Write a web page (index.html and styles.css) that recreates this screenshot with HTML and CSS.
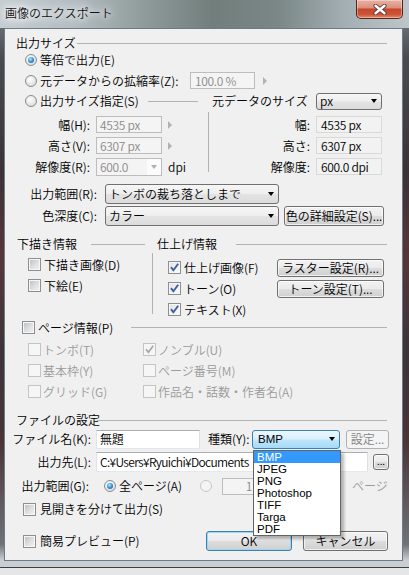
FILE: index.html
```html
<!DOCTYPE html>
<html lang="ja">
<head>
<meta charset="utf-8">
<title>画像のエクスポート</title>
<link rel="stylesheet" href="styles.css">
</head>
<body>
<div class="window">
  <div class="titlebar">
    <span class="title">画像のエクスポート</span>
    <div class="close">
      <svg width="16" height="11" viewBox="0 0 16 11"><path d="M3.5 1.8 L12.5 9.2 M12.5 1.8 L3.5 9.2" stroke="#5a3a34" stroke-width="4.2" stroke-linecap="round"/><path d="M3.5 1.8 L12.5 9.2 M12.5 1.8 L3.5 9.2" stroke="#ffffff" stroke-width="2.4" stroke-linecap="round"/></svg>
    </div>
  </div>

  <div class="client">
    <div class="hdr hdr-size"><span class="hdr-text size-text">出力サイズ</span><span class="hline"></span></div>

    <div class="row opt-e"><span class="radio on"></span><span class="txt">等倍で出力(E)</span></div>
    <div class="row opt-z"><span class="radio"></span><span class="txt scale-lbl">元データからの拡縮率(Z):</span><span class="inp dis scale-inp">100.0 %</span><span class="tri scale-tri"></span></div>
    <div class="row opt-s"><span class="radio"></span><span class="txt spec-lbl">出力サイズ指定(S)</span><span class="hline spec-line"></span><span class="txt src-lbl">元データのサイズ</span><span class="sel unit-sel">px</span></div>

    <div class="size-block">
      <div class="sb-left">
        <div class="srow"><span class="lbl sb-lbl">幅(H):</span><span class="inp dis sb-inp">4535 px</span><span class="tri"></span></div>
        <div class="srow"><span class="lbl sb-lbl">高さ(V):</span><span class="inp dis sb-inp">6307 px</span><span class="tri"></span></div>
        <div class="srow"><span class="lbl sb-lbl">解像度(R):</span><span class="combo-dis"><span class="combo-text">600.0</span><span class="combo-btn"></span></span><span class="txt dpi">dpi</span></div>
      </div>
      <div class="vline size-vline"></div>
      <div class="sb-right">
        <div class="srow"><span class="lbl sbr-lbl">幅:</span><span class="ro">4535 px</span></div>
        <div class="srow"><span class="lbl sbr-lbl">高さ:</span><span class="ro">6307 px</span></div>
        <div class="srow"><span class="lbl sbr-lbl">解像度:</span><span class="ro">600.0 dpi</span></div>
      </div>
    </div>

    <div class="row range-row"><span class="lbl range-lbl">出力範囲(R):</span><span class="sel wide-sel">トンボの裁ち落としまで</span></div>
    <div class="row depth-row"><span class="lbl range-lbl">色深度(C):</span><span class="sel wide-sel">カラー</span><span class="btn color-btn">色の詳細設定(S)...</span></div>

    <div class="info-hdr">
      <div class="ih-left"><span class="hdr-text draft-text">下描き情報</span><span class="hline"></span></div>
      <div class="ih-right"><span class="hdr-text finish-text">仕上げ情報</span><span class="hline"></span></div>
    </div>
    <div class="info-block">
      <div class="ib-left">
        <div class="crow"><span class="cb"></span><span class="txt">下描き画像(D)</span></div>
        <div class="crow"><span class="cb"></span><span class="txt">下絵(E)</span></div>
      </div>
      <div class="vline info-vline"></div>
      <div class="ib-right">
        <div class="crow"><span class="cb checked"><svg viewBox="0 0 11 11" width="11" height="11"><path d="M2 5.2 L4.4 8.3 L9.2 1.8" fill="none" stroke="#3f5d9e" stroke-width="1.9"/></svg></span><span class="txt ib-txt">仕上げ画像(F)</span><span class="btn set-btn">ラスター設定(R)...</span></div>
        <div class="crow"><span class="cb checked"><svg viewBox="0 0 11 11" width="11" height="11"><path d="M2 5.2 L4.4 8.3 L9.2 1.8" fill="none" stroke="#3f5d9e" stroke-width="1.9"/></svg></span><span class="txt ib-txt">トーン(O)</span><span class="btn set-btn">トーン設定(T)...</span></div>
        <div class="crow"><span class="cb checked"><svg viewBox="0 0 11 11" width="11" height="11"><path d="M2 5.2 L4.4 8.3 L9.2 1.8" fill="none" stroke="#3f5d9e" stroke-width="1.9"/></svg></span><span class="txt">テキスト(X)</span></div>
      </div>
    </div>

    <div class="hdr page-hdr"><span class="cb"></span><span class="hdr-text page-text">ページ情報(P)</span><span class="hline"></span></div>
    <div class="page-grid">
      <div class="pcell"><span class="cb dis"></span><span class="txt gray">トンボ(T)</span></div>
      <div class="pcell"><span class="cb dis"><svg viewBox="0 0 11 11" width="11" height="11"><path d="M2 5.2 L4.4 8.3 L9.2 1.8" fill="none" stroke="#a8a8a8" stroke-width="1.7"/></svg></span><span class="txt gray">ノンブル(U)</span></div>
      <div class="pcell"><span class="cb dis"></span><span class="txt gray">基本枠(Y)</span></div>
      <div class="pcell"><span class="cb dis"></span><span class="txt gray">ページ番号(M)</span></div>
      <div class="pcell"><span class="cb dis"></span><span class="txt gray">グリッド(G)</span></div>
      <div class="pcell"><span class="cb dis"></span><span class="txt gray">作品名・話数・作者名(A)</span></div>
    </div>

    <div class="hdr file-hdr"><span class="hdr-text file-text">ファイルの設定</span><span class="hline"></span></div>
    <div class="row name-row"><span class="lbl file-lbl">ファイル名(K):</span><span class="inp name-inp">無題</span><span class="txt type-lbl">種類(Y):</span><span class="sel focus type-sel">BMP</span><span class="btn dis opt-btn">設定...</span></div>
    <div class="row dest-row"><span class="lbl file-lbl">出力先(L):</span><span class="inp dest-inp"><span class="dest-text">C:¥Users¥Ryuichi¥Documents</span></span><span class="btn browse-btn">...</span></div>
    <div class="row out-row"><span class="lbl out-lbl">出力範囲(G):</span><span class="radio on out-radio"></span><span class="txt all-txt">全ページ(A)</span><span class="radio dis"></span><span class="inp dis page-inp">1</span><span class="txt gray page-unit">ページ</span></div>
    <div class="row spread-row"><span class="cb"></span><span class="txt cb-txt">見開きを分けて出力(S)</span></div>
    <div class="row preview-row"><span class="cb"></span><span class="txt cb-txt preview-txt">簡易プレビュー(P)</span><span class="btn default ok-btn">OK</span><span class="btn cancel-btn">キャンセル</span></div>
  </div>

  <div class="dropdown">
    <div class="item sel-item">BMP</div>
    <div class="item">JPEG</div>
    <div class="item">PNG</div>
    <div class="item">Photoshop</div>
    <div class="item">TIFF</div>
    <div class="item">Targa</div>
    <div class="item">PDF</div>
  </div>
</div>
</body>
</html>
```

FILE: styles.css
```css
* { box-sizing: border-box; }
html, body { margin: 0; padding: 0; }
body {
  width: 409px; height: 575px; overflow: hidden;
  background: #e4e6e8;
  font-family: "Noto Sans CJK JP", sans-serif;
  font-size: 12px; font-weight: 350; color: #000;
}
.window {
  position: relative;
  width: 409px; height: 568px;
  background: linear-gradient(180deg, #7f8a90 0%, #4a4c52 10%, #3a3236 30%, #55363a 45%, #3b3538 62%, #4a3437 78%, #6f7378 96%, #c9ced3 98.8%);
  border-bottom: 1px solid #404040;
}
.titlebar {
  height: 28px;
  display: flex; justify-content: space-between; align-items: flex-start;
  background: linear-gradient(90deg, #c4cdd2 0%, #b3bdc2 18%, #8e9a99 36%, #717e7c 52%, #7a8786 68%, #a3aeb3 84%, #bcc5ca 100%);
}
.title {
  margin: 6px 0 0 5px; line-height: 14px; color: #141414;
  text-shadow: 0 0 6px #fff, 0 0 10px #fff, 0 0 14px #fff;
}
.close {
  margin-right: 6px; width: 47px; height: 19px;
  border: 1px solid #5b2419; border-top: none; border-radius: 0 0 5px 5px;
  background: linear-gradient(180deg, #eab2a4 0%, #dc917e 42%, #c5482c 52%, #cd5336 80%, #e08b70 100%);
  box-shadow: inset 0 0 0 1px rgba(255,255,255,0.35);
  display: flex; align-items: center; justify-content: center;
}
.client {
  margin-left: 4px; width: 399px; height: 533px;
  border: 1px solid #6e7c88;
  background: #f0f0f0;
  padding-top: 6px;
}
.txt, .lbl, .hdr-text { line-height: 14px; white-space: nowrap; flex: none; }
.lbl { text-align: right; }
.gray { color: #9a9a9a; }
.row { display: flex; align-items: center; }
.hdr { display: flex; align-items: center; height: 16px; margin-right: 15px; }
.hline { flex: 1; height: 1px; background: #b2b2b2; }

/* controls */
.radio {
  flex: none; width: 12px; height: 12px; border-radius: 50%;
  border: 1px solid #8a8c8e;
  background: radial-gradient(circle at 40% 35%, #ffffff 0%, #e6e6e6 55%, #cfd1d3 100%);
  display: flex; align-items: center; justify-content: center;
  margin-right: 3px;
}
.radio.on::after {
  content: ""; width: 6px; height: 6px; border-radius: 50%;
  background: radial-gradient(circle at 40% 35%, #b8ecff 0%, #3a9be0 45%, #0e4f92 100%);
}
.radio.dis { border-color: #c6c6c6; background: #f4f4f4; }
.cb {
  flex: none; width: 13px; height: 13px;
  border: 1px solid #8e8f8f;
  background: linear-gradient(135deg, #b9bdc2 0%, #dfe0e2 55%, #f4f4f4 100%);
  box-shadow: inset 0 0 0 1px #f6f6f6;
  margin-right: 3px;
}
.cb svg { display: block; }
.cb.checked { background: linear-gradient(135deg, #dfe2e6 0%, #f1f2f3 60%, #fafafa 100%); }
.cb.dis { border-color: #c4c4c4; background: #f6f6f6; box-shadow: none; margin-right: 2px; }
.inp {
  flex: none; display: flex; align-items: center;
  height: 17px; padding-left: 3px;
  border: 1px solid #abadb3; border-color: #abadb3 #dbdfe6 #e3e9ef #e2e3ea;
  background: #fff; line-height: 14px; letter-spacing: -0.3px;
  white-space: nowrap; overflow: hidden;
}
.inp.dis { border: 1px solid #bdbdbd; background: #f4f4f4; color: #8a8a8a; }
.ro {
  flex: none; width: 66px; height: 17px; margin-left: 6px;
  display: flex; align-items: center; padding-left: 4px;
  border: 1px solid #d9d9d9; background: #f2f2f2;
  line-height: 14px; letter-spacing: -0.3px;
}
.tri {
  flex: none; width: 0; height: 0; margin-left: 6px;
  border-top: 4px solid transparent; border-bottom: 4px solid transparent;
  border-left: 4px solid #b2b2b2;
}
.sel {
  flex: none; display: flex; align-items: center; justify-content: space-between;
  padding: 0 4px 0 3px;
  border: 1px solid #707070; border-radius: 3px;
  background: linear-gradient(180deg, #f6f6f6 0%, #eeeeee 48%, #e3e3e3 52%, #dcdcdc 100%);
  line-height: 14px; white-space: nowrap;
}
.sel::after {
  content: ""; width: 0; height: 0;
  border-left: 3.5px solid transparent; border-right: 3.5px solid transparent;
  border-top: 4px solid #000;
}
.sel.focus {
  border-color: #3c7fb1;
  background: linear-gradient(180deg, #eaf6fd 0%, #d9f0fc 48%, #bee6fd 52%, #a7d9f5 100%);
  font-family: "Liberation Sans", sans-serif; font-size: 11.5px; font-weight: 400; padding-left: 5px;
}
.btn {
  flex: none; display: flex; align-items: center; justify-content: center;
  border: 1px solid #707070; border-radius: 3px;
  background: linear-gradient(180deg, #f2f2f2 0%, #ebebeb 48%, #dddddd 52%, #cfcfcf 100%);
  box-shadow: inset 0 0 0 1px rgba(255,255,255,0.7);
  line-height: 14px; white-space: nowrap;
}
.btn.dis { border-color: #adb2b5; background: #f4f4f4; color: #838383; box-shadow: none; }
.btn.default { border-color: #3c7fb1; box-shadow: inset 0 0 0 1px #9fd6f6; }

/* rows */
.hdr-size { padding-left: 11px; }
.size-text { width: 61px; }
.opt-e { height: 18px; padding-left: 20px; }
.opt-z { height: 23px; padding-left: 20px; }
.scale-lbl { width: 150px; }
.scale-inp { width: 65px; padding-left: 4px; }
.scale-tri { margin-left: 8px; }
.opt-s { height: 18px; padding-left: 20px; }
.spec-lbl { width: 108px; }
.spec-line { flex: none; width: 50px; }
.src-lbl { width: 104px; margin-left: 14px; }
.unit-sel { width: 66px; height: 17px; }

.size-block { display: flex; align-items: flex-start; margin-top: 4px; height: 63px; }
.sb-left { width: 203px; }
.sb-right { flex: 1; }
.srow { display: flex; align-items: center; height: 21px; }
.sb-lbl { width: 85px; }
.sb-inp { width: 66px; margin-left: 6px; }
.sbr-lbl { width: 101px; }
.vline { flex: none; width: 1px; background: #b2b2b2; }
.size-vline { margin-top: -2px; height: 60px; }
.combo-dis {
  flex: none; display: flex; width: 66px; height: 18px; margin-left: 6px;
  border: 1px solid #bdbdbd; background: #f4f4f4;
}
.combo-text { flex: 1; padding-left: 3px; line-height: 16px; color: #8a8a8a; letter-spacing: -0.3px; }
.combo-btn {
  width: 14px; display: flex; align-items: center; justify-content: center;
  background: #fbfbfb;
}
.combo-btn::after {
  content: ""; width: 0; height: 0;
  border-left: 3.5px solid transparent; border-right: 3.5px solid transparent;
  border-top: 4px solid #b0b0b0;
}
.dpi { margin-left: 6px; }

.range-row { margin-top: 6px; height: 22px; }
.depth-row { height: 22px; }
.range-lbl { width: 92px; }
.wide-sel { width: 174px; height: 20px; margin-left: 8px; }
.color-btn { width: 100px; height: 20px; margin-left: 5px; }

.info-hdr { display: flex; margin-top: 9px; height: 16px; }
.ih-left { width: 147px; display: flex; align-items: center; padding-left: 12px; padding-right: 7px; }
.ih-right { flex: 1; display: flex; align-items: center; padding-left: 5px; padding-right: 15px; }
.draft-text { width: 74px; }
.finish-text { width: 79px; }
.info-block { display: flex; align-items: flex-start; height: 68px; }
.ib-left { width: 147px; padding-top: 2px; padding-left: 23px; }
.info-vline { margin-top: 1px; height: 61px; }
.ib-right { flex: 1; padding-top: 5px; padding-left: 15px; }
.crow { display: flex; align-items: center; height: 21px; }
.ib-txt { width: 93px; }
.set-btn { width: 107px; height: 18px; }

.page-hdr { height: 15px; padding-left: 17px; }
.page-text { width: 93px; }
.page-grid {
  display: grid; grid-template-columns: 115px auto; grid-auto-rows: 21px;
  margin-top: 4px; padding-left: 23px;
}
.pcell { display: flex; align-items: center; }

.file-hdr { margin-top: 10px; padding-left: 11px; }
.file-text { width: 81px; }
.name-row { margin-top: 1px; height: 20px; }
.file-lbl { width: 86px; }
.name-inp { width: 104px; height: 19px; margin-left: 5px; }
.type-lbl { width: 44px; margin-left: 8px; }
.type-sel { width: 88px; height: 19px; }
.opt-btn { width: 43px; height: 19px; margin-left: 6px; }
.dest-row { margin-top: 2px; height: 22px; }
.dest-inp { width: 272px; height: 20px; margin-left: 5px; }
.dest-text { letter-spacing: -0.65px; }
.browse-btn { width: 16px; height: 16px; margin-left: 5px; font-size: 10px; line-height: 10px; align-items: flex-end; padding-bottom: 3px; }
.out-row { margin-top: 2px; height: 22px; }
.out-lbl { width: 84px; }
.out-radio { margin-left: 15px; }
.all-txt { width: 81px; }
.page-inp { width: 54px; margin-left: 7px; justify-content: center; padding-left: 0; }
.page-unit { margin-left: 76px; }
.spread-row { margin-top: 1px; height: 22px; padding-left: 18px; }
.cb-txt { margin-left: 1px; }
.preview-row { margin-top: 10px; height: 22px; padding-left: 18px; }
.preview-txt { width: 166px; }
.ok-btn { width: 86px; height: 20px; }
.cancel-btn { width: 85px; height: 20px; margin-left: 11px; }

/* open list of the type combo */
.dropdown {
  position: absolute; left: 253px; top: 450px;
  width: 88px; height: 86px;
  border: 1px solid #646464; background: #fff;
  box-shadow: 3px 3px 3px rgba(0,0,0,0.28);
  font-family: "Liberation Sans", sans-serif; font-size: 11.5px; font-weight: 400;
}
.item { height: 12px; line-height: 12px; padding-left: 3px; white-space: nowrap; }
.sel-item { background: #3399ff; color: #fff; }
```
